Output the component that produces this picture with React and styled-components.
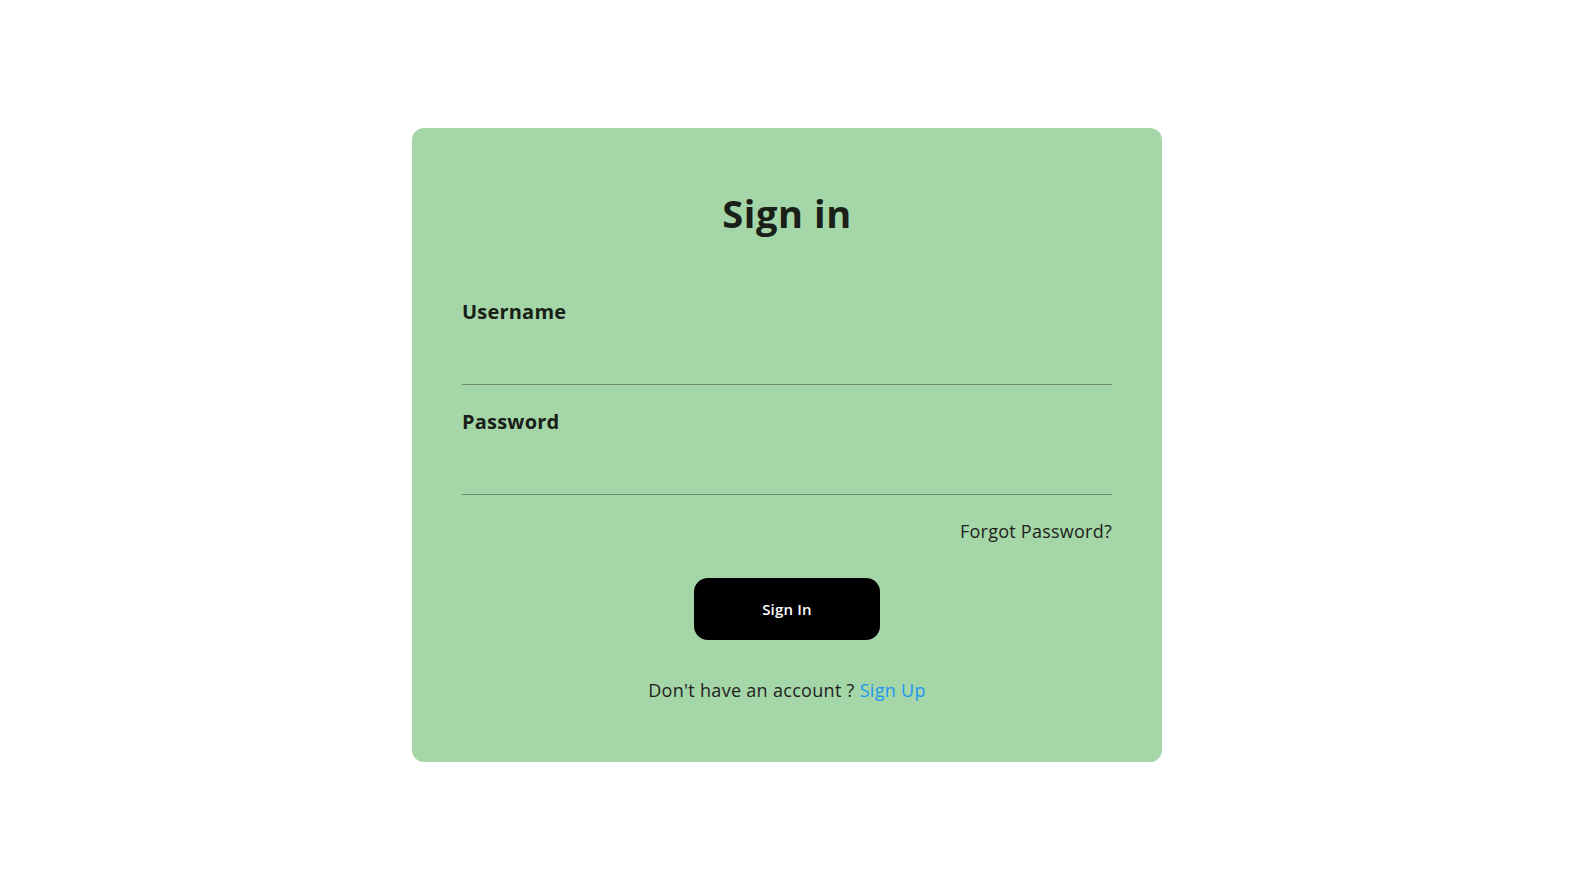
import React from "react";
import styled, { createGlobalStyle } from "styled-components";

const Global = createGlobalStyle`
  html, body { margin: 0; padding: 0; background: #ffffff; }
  body { font-family: "Open Sans", "Liberation Sans", sans-serif; }
  * { box-sizing: border-box; }
`;

const Page = styled.div`
  display: flex;
  justify-content: center;
  align-items: flex-start;
  padding-top: 128px;
  min-height: 890px;
`;

const Card = styled.form`
  width: 750px;
  background: #a5d6a7;
  border-radius: 12px;
  padding: 62px 50px 61px;
  display: flex;
  flex-direction: column;
`;

const Title = styled.h1`
  margin: 0;
  text-align: center;
  font-size: 38px;
  line-height: 46px;
  font-weight: 700;
  color: #182018;
  letter-spacing: 0.6px;
`;

const Field = styled.div`
  display: flex;
  flex-direction: column;
  margin-top: ${(p) => p.$gap}px;
`;

const Label = styled.label`
  font-size: 20px;
  line-height: 24px;
  font-weight: 700;
  color: #182018;
  letter-spacing: 0.2px;
`;

const Input = styled.input`
  height: 61px;
  border: none;
  border-bottom: 1px solid #6b876c;
  background: transparent;
  outline: none;
  font-size: 18px;
  padding: 0;
`;

const Forgot = styled.a`
  margin-top: 25px;
  align-self: flex-end;
  font-size: 18px;
  line-height: 22px;
  color: #1e221e;
  text-decoration: none;
  letter-spacing: 0.25px;
`;

const Button = styled.button`
  margin-top: 36px;
  align-self: center;
  width: 186px;
  height: 62px;
  border: none;
  border-radius: 14px;
  background: #000;
  color: #fff;
  font-family: inherit;
  font-size: 15px;
  font-weight: 600;
  letter-spacing: 0.2px;
  cursor: pointer;
`;

const Footer = styled.p`
  margin: 39px 0 0;
  text-align: center;
  font-size: 18px;
  line-height: 22px;
  color: #1e221e;
  letter-spacing: 0.3px;
`;

const Link = styled.a`
  color: #2196f3;
  text-decoration: none;
`;

export default function App() {
  return (
    <>
      <Global />
      <Page>
        <Card onSubmit={(e) => e.preventDefault()}>
          <Title>Sign in</Title>
          <Field $gap={64}>
            <Label>Username</Label>
            <Input type="text" />
          </Field>
          <Field $gap={25}>
            <Label>Password</Label>
            <Input type="password" />
          </Field>
          <Forgot href="#">Forgot Password?</Forgot>
          <Button type="submit">Sign In</Button>
          <Footer>
            Don't have an account ? <Link href="#">Sign Up</Link>
          </Footer>
        </Card>
      </Page>
    </>
  );
}
